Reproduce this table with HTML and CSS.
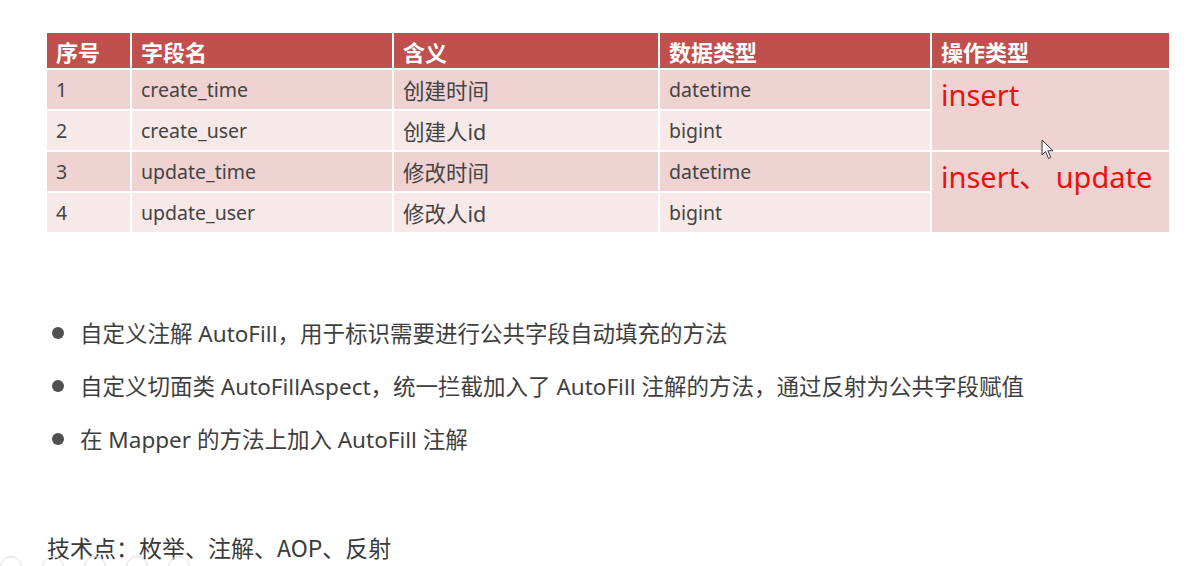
FILE: index.html
```html
<!DOCTYPE html>
<html lang="zh">
<head>
<meta charset="utf-8">
<title>AutoFill</title>
<link rel="stylesheet" href="styles.css">
</head>
<body>
<div class="slide">
  <div class="table">
    <div class="th">序号</div>
    <div class="th">字段名</div>
    <div class="th">含义</div>
    <div class="th">数据类型</div>
    <div class="th">操作类型</div>

    <div class="td odd r1">1</div>
    <div class="td odd r1">create_time</div>
    <div class="td odd r1 zh">创建时间</div>
    <div class="td odd r1">datetime</div>
    <div class="op op1">insert</div>

    <div class="td even r2">2</div>
    <div class="td even r2">create_user</div>
    <div class="td even r2 zh">创建人id</div>
    <div class="td even r2">bigint</div>

    <div class="td odd r3">3</div>
    <div class="td odd r3">update_time</div>
    <div class="td odd r3 zh">修改时间</div>
    <div class="td odd r3">datetime</div>
    <div class="op op2">insert、 update</div>

    <div class="td even r4">4</div>
    <div class="td even r4">update_user</div>
    <div class="td even r4 zh">修改人id</div>
    <div class="td even r4">bigint</div>
  </div>

  <ul class="points">
    <li>自定义注解 AutoFill，用于标识需要进行公共字段自动填充的方法</li>
    <li>自定义切面类 AutoFillAspect，统一拦截加入了 AutoFill 注解的方法，通过反射为公共字段赋值</li>
    <li>在 Mapper 的方法上加入 AutoFill 注解</li>
  </ul>

  <p class="tech">技术点：枚举、注解、AOP、反射</p>
</div>

<div class="controls">
  <span class="ring"></span><span class="ring"></span><span class="ring"></span><span class="ring"></span><span class="ring"></span>
</div>

<svg class="cursor" width="14" height="21" viewBox="0 0 14 21">
  <path d="M1 1 L1 16 L4.5 12.5 L7.5 19.5 L9.8 18.5 L6.9 11.8 L12 11.8 Z" fill="#fff" stroke="#333" stroke-width="1" stroke-linejoin="round"/>
</svg>
</body>
</html>
```

FILE: styles.css
```css
html, body {
  margin: 0;
  padding: 0;
  background: #ffffff;
}

body {
  width: 1187px;
  height: 566px;
  overflow: hidden;
  position: relative;
  font-family: "Noto Sans", "Noto Sans CJK SC", sans-serif;
  color: #404040;
}

.slide {
  padding: 33px 18px 0 47px;
}

.table {
  display: grid;
  width: 1122px;
  grid-template-columns: 83px 260px 264px 270px 237px;
  grid-template-rows: 35px 39px 39px 39px 39px;
  gap: 2px;
}

.th {
  background: #c0504d;
  color: #ffffff;
  font-family: "Noto Sans CJK SC", sans-serif;
  font-weight: 700;
  font-size: 22px;
  display: flex;
  align-items: center;
  padding-left: 9px;
}

.td {
  display: flex;
  align-items: center;
  padding-left: 9px;
  font-size: 19.5px;
  color: #444444;
}

.td.zh {
  font-size: 21.5px;
}

.odd { background: #efd3d2; }
.even { background: #f8e9e9; }

.op {
  background: #efd3d2;
  grid-column: 5;
  color: #e8120f;
  font-size: 29px;
  padding: 5px 0 0 9px;
  line-height: 1.36;
  white-space: nowrap;
}

.op1 { grid-row: 2 / span 2; }
.op2 { grid-row: 4 / span 2; }

.points {
  list-style: none;
  margin: 75px 0 0 0;
  padding: 0;
}

.points li {
  position: relative;
  padding-left: 33px;
  font-size: 22.5px;
  line-height: 53px;
  height: 53px;
  color: #3f3f3f;
  white-space: nowrap;
}

.points li::before {
  content: "";
  position: absolute;
  left: 5px;
  top: 20px;
  width: 12px;
  height: 12px;
  border-radius: 50%;
  background: #505050;
}

.tech {
  margin: 55px 0 0 0;
  font-size: 23px;
  line-height: 53px;
  color: #3a3a3a;
  font-family: "Noto Sans CJK SC", "Noto Sans", sans-serif;
}

.controls {
  position: absolute;
  left: 0;
  top: 556px;
  display: flex;
  gap: 20px;
}

.ring {
  width: 22px;
  height: 22px;
  border: 1px solid #dcdcdc;
  border-radius: 50%;
  box-sizing: border-box;
}

.cursor {
  position: absolute;
  left: 1041px;
  top: 139px;
}
```
